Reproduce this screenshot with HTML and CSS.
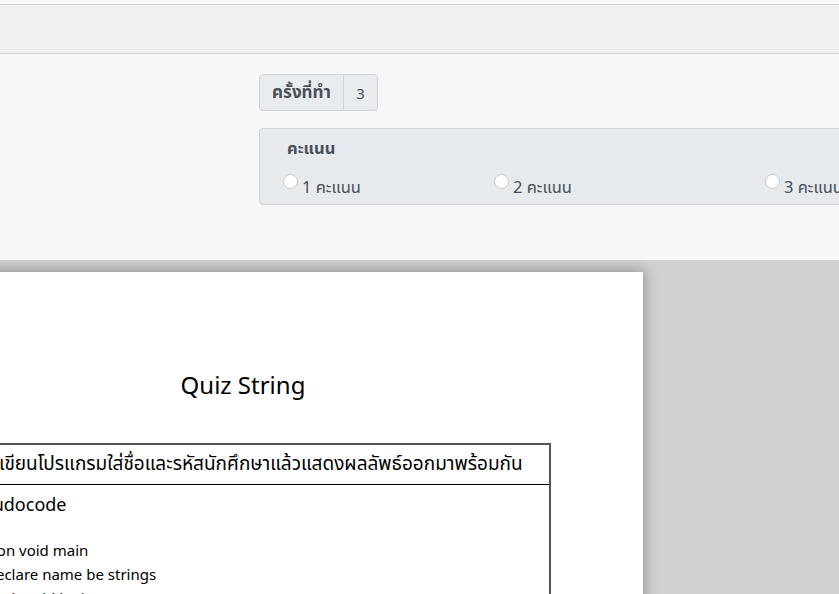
FILE: index.html
```html
<!DOCTYPE html>
<html lang="th">
<head>
<meta charset="utf-8">
<title>Quiz String</title>
<link rel="stylesheet" href="styles.css">
</head>
<body>
<div class="topstrip"></div>
<div class="header"></div>
<section class="panel">
  <div class="attempt">
    <span class="attempt-label">ครั้งที่ทำ</span>
    <span class="attempt-value">3</span>
  </div>
  <div class="score">
    <div class="score-title">คะแนน</div>
    <div class="score-options">
      <label class="opt opt1"><span class="radio"></span>1 คะแนน</label>
      <label class="opt opt2"><span class="radio"></span>2 คะแนน</label>
      <label class="opt opt3"><span class="radio"></span>3 คะแนน</label>
    </div>
  </div>
</section>
<section class="viewer">
  <div class="page">
    <h1 class="doc-title">Quiz String</h1>
    <table class="quiz">
      <tr><td class="q">เขียนโปรแกรมใส่ชื่อและรหัสนักศึกษาแล้วแสดงผลลัพธ์ออกมาพร้อมกัน</td></tr>
      <tr><td class="code">
        <div class="code-head">Pseudocode</div>
        <div class="line">Function void main</div>
        <div class="line ind">Declare name be strings</div>
        <div class="line ind">Declare id be integer</div>
      </td></tr>
    </table>
  </div>
</section>
</body>
</html>
```
FILE: styles.css
```css
* { box-sizing: border-box; }
html, body { margin: 0; padding: 0; overflow: hidden; }
body {
  width: 839px;
  height: 594px;
  font-family: "Noto Sans", "Noto Sans Thai", "Liberation Sans", sans-serif;
  color: #495057;
  background: #d0d0d0;
}
.topstrip { height: 5px; background: #f7f7f8; border-bottom: 1px solid #d4d6d9; }
.header { height: 49px; background: #eff0f2; border-bottom: 1px solid #d3d5d8; }
.panel {
  height: 206px;
  background: #f7f8fa;
  padding: 20px 0 0 259px;
}
.attempt {
  display: inline-flex;
  height: 37px;
  border: 1px solid #ced4da;
  border-radius: 4px;
  background: #e9ecef;
  font-size: 16px;
  overflow: hidden;
}
.attempt-label {
  width: 84px;
  display: flex; align-items: center; justify-content: center;
  font-weight: 700;
  font-size: 17px;
  border-right: 1px solid #ced4da;
}
.attempt-value {
  width: 33px;
  font-size: 15px;
  display: flex; align-items: center; justify-content: center;
}
.score {
  margin-top: 17px;
  height: 77px;
  width: 620px;
  border: 1px solid #ced4da;
  border-right: none;
  border-radius: 4px 0 0 4px;
  background: #e7eaed;
  padding: 6px 0 0 27px;
  font-size: 16.5px;
}
.score-title { font-weight: 700; height: 26px; line-height: 26px; }
.score-options { display: flex; margin-top: 12px; margin-left: -4px; }
.opt { display: flex; align-items: flex-end; white-space: nowrap; height: 24px; line-height: 20px; }
.opt1 { width: 211px; }
.opt2 { width: 271px; }
.radio {
  width: 15px; height: 15px;
  border-radius: 50%;
  background: #fff;
  border: 1px solid #c5c8cb;
  align-self: flex-start;
  margin-top: 1px;
  margin-right: 4px;
}
.viewer {
  height: 334px;
  padding-top: 12px;
  overflow: hidden;
}
.page {
  width: 800px;
  height: 400px;
  margin-left: -157px;
  background: #fff;
  box-shadow: 0 0 12px 2px rgba(0,0,0,.28);
  padding-top: 96px;
  color: #000;
  font-family: "Noto Sans", "Noto Sans Thai", sans-serif;
}
.doc-title {
  margin: 0;
  text-align: center;
  font-weight: 400;
  font-size: 24px;
  line-height: 34px;
  height: 75px;
}
.quiz {
  border-collapse: collapse;
  margin-left: 107px;
  width: 601px;
  border: 2px solid #555;
}
.quiz td { padding: 0; }
.q {
  height: 40px;
  border-bottom: 1.5px solid #000;
  font-size: 19px;
  padding-left: 47px !important;
  white-space: nowrap;
}
.code { vertical-align: top; font-size: 15px; padding-left: 2px !important; }
.code-head { font-size: 18px; padding-left: 9px; height: 39px; line-height: 38px; }
.line { line-height: 24px; }
.code-head + .line { margin-top: 14px; }
.ind { padding-left: 31px; }
```
